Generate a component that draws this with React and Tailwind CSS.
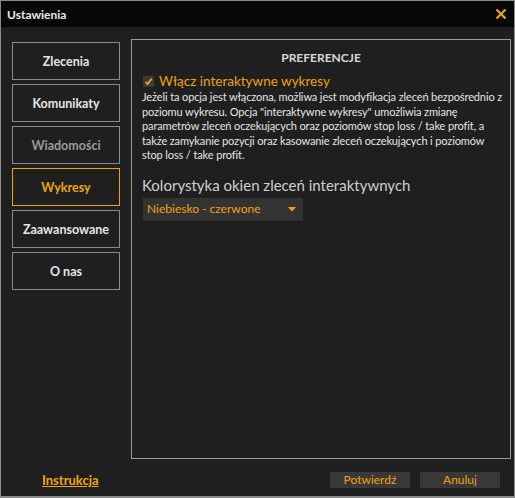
import React from "react";

const font = { fontFamily: 'Lato, "Open Sans", sans-serif' };

function NavBtn({ label, active, disabled }) {
  const cls = active
    ? "border-[#f0a30a] text-[#f0a30a]"
    : disabled
    ? "border-[#8a8a8a] text-[#9a9a9a]"
    : "border-[#8a8a8a] text-[#e6e6e6]";
  return (
    <div className={`h-[38px] w-[108px] border flex items-center justify-center pt-[2px] text-[12.5px] font-bold ${cls}`}>
      {label}
    </div>
  );
}

export default function App() {
  return (
    <div className="w-[515px] h-[498px] bg-[#1f1f1f] border border-[#8a8a8a] border-b-2 flex flex-col relative overflow-hidden" style={font}>
      <div className="h-[26px] bg-[#080808] flex items-center justify-between pl-[6px] pr-[6px] shrink-0">
        <span className="text-[12px] font-bold text-[#e8e8e8] pt-[2px]">Ustawienia</span>
        <svg width="12" height="12" viewBox="0 0 12 12" className="mr-[1px]">
          <path d="M1.5 1.5 L10.5 10.5 M10.5 1.5 L1.5 10.5" stroke="#f0a30a" strokeWidth="2.2" />
        </svg>
      </div>
      <div className="flex flex-1 pl-[11px] pr-[4px] pt-[12px]">
        <div className="flex flex-col gap-[4px] pt-[3px] w-[108px] shrink-0">
          <NavBtn label="Zlecenia" />
          <NavBtn label="Komunikaty" />
          <NavBtn label="Wiadomości" disabled />
          <NavBtn label="Wykresy" active />
          <NavBtn label="Zaawansowane" />
          <NavBtn label="O nas" />
        </div>
        <div className="ml-[11px] w-[380px] h-[420px] border border-[#9a9a9a] flex flex-col px-[10px]">
          <div className="text-center text-[12px] font-bold text-[#d8d8d8] mt-[10px] leading-[16px]">PREFERENCJE</div>
          <div className="flex items-center mt-[6px] ml-[1px]">
            <div className="w-[11px] h-[11px] bg-[#3a3a3a] flex items-center justify-center">
              <svg width="9" height="9" viewBox="0 0 9 9">
                <path d="M1.5 4.8 L3.6 7 L7.6 1.6" stroke="#f0a30a" strokeWidth="1.8" fill="none" />
              </svg>
            </div>
            <span className="ml-[5px] text-[13.5px] text-[#f0a30a] leading-[18px]">Włącz interaktywne wykresy</span>
          </div>
          <div className="text-[11px] leading-[14.5px] text-[#e6e6e6] whitespace-nowrap tracking-[-0.12px]">
            <div>Jeżeli ta opcja jest włączona, możliwa jest modyfikacja zleceń bezpośrednio z</div>
            <div>poziomu wykresu. Opcja "interaktywne wykresy" umożliwia zmianę</div>
            <div>parametrów zleceń oczekujących oraz poziomów stop loss / take profit, a</div>
            <div>także zamykanie pozycji oraz kasowanie zleceń oczekujących i poziomów</div>
            <div>stop loss / take profit.</div>
          </div>
          <div className="mt-[13px] text-[15px] text-[#cfcfcf] leading-[18px]">Kolorystyka okien zleceń interaktywnych</div>
          <div className="mt-[4px] ml-[1px] w-[160px] h-[23px] bg-[#333333] flex items-center justify-between pl-[4px] pr-[7px]">
            <span className="text-[12px] text-[#f0a30a]">Niebiesko - czerwone</span>
            <svg width="8" height="5" viewBox="0 0 8 5">
              <path d="M0 0 L8 0 L4 4.5 Z" fill="#f0a30a" />
            </svg>
          </div>
        </div>
      </div>
      <div className="h-[28px] flex items-center pl-[41px] pr-[14px] pb-[5px]">
        <span className="text-[13px] font-bold text-[#f0a30a] underline pt-[3px]">Instrukcja</span>
        <div className="flex-1" />
        <div className="w-[80px] h-[16px] bg-[#383838] flex items-center justify-center text-[12px] text-[#f0a30a]">Potwierdź</div>
        <div className="ml-[10px] w-[80px] h-[16px] bg-[#383838] flex items-center justify-center text-[12px] text-[#f0a30a]">Anuluj</div>
      </div>
    </div>
  );
}
